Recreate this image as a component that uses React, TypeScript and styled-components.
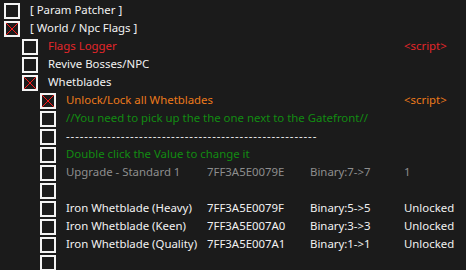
import { createGlobalStyle } from 'styled-components';
import styled from 'styled-components';

type Tone = 'white' | 'red' | 'orange' | 'green' | 'grey';

type RowType = {
  level: number;
  checked?: boolean;
  tone?: Tone;
  desc?: string;
  address?: string;
  kind?: string;
  value?: string;
  dashed?: boolean;
};

const colors: Record<Tone, string> = {
  white: '#f2f2f2',
  red: '#e3262a',
  orange: '#ec7a1c',
  green: '#128b12',
  grey: '#8e8e8e',
};

const rows: RowType[] = [
  { level: 0, desc: '[ Param Patcher ]' },
  { level: 0, checked: true, desc: '[ World / Npc Flags ]' },
  { level: 1, tone: 'red', desc: 'Flags Logger', value: '<script>' },
  { level: 1, desc: 'Revive Bosses/NPC' },
  { level: 1, checked: true, desc: 'Whetblades' },
  { level: 2, checked: true, tone: 'orange', desc: 'Unlock/Lock all Whetblades', value: '<script>' },
  { level: 2, tone: 'green', desc: '//You need to pick up the the one next to the Gatefront//' },
  { level: 2, desc: '-'.repeat(55), dashed: true },
  { level: 2, tone: 'green', desc: 'Double click the Value to change it' },
  { level: 2, tone: 'grey', desc: 'Upgrade - Standard 1', address: '7FF3A5E0079E', kind: 'Binary:7->7', value: '1' },
  { level: 2 },
  { level: 2, desc: 'Iron Whetblade (Heavy)', address: '7FF3A5E0079F', kind: 'Binary:5->5', value: 'Unlocked' },
  { level: 2, desc: 'Iron Whetblade (Keen)', address: '7FF3A5E007A0', kind: 'Binary:3->3', value: 'Unlocked' },
  { level: 2, desc: 'Iron Whetblade (Quality)', address: '7FF3A5E007A1', kind: 'Binary:1->1', value: 'Unlocked' },
  { level: 2 },
];

const GlobalStyle = createGlobalStyle`
  html, body {
    margin: 0;
    padding: 0;
    background: #1b1b1b;
  }
  body {
    width: 466px;
    height: 270px;
    overflow: hidden;
    font-family: "Noto Sans", "Open Sans", sans-serif;
    font-size: 11.4px;
  }
`;

const CrossIcon = () => (
  <svg width="12" height="12" viewBox="0 0 12 12">
    <path d="M0 0 L12 12 M12 0 L0 12" stroke="#ff1a1a" strokeWidth="1" />
  </svg>
);

const App = () => (
  <>
    <GlobalStyle />
    <Table>
      {rows.map((r, i) => {
        const tone = r.tone ?? 'white';
        return (
          <Row key={i}>
            <Desc $level={r.level}>
              <Check>{r.checked && <CrossIcon />}</Check>
              <Text $tone={tone} $dashed={r.dashed}>{r.desc}</Text>
            </Desc>
            <Cell $tone={tone}>{r.address}</Cell>
            <Cell $tone={tone}>{r.kind}</Cell>
            <Cell $tone={tone}>{r.value}</Cell>
          </Row>
        );
      })}
    </Table>
  </>
);

export default App;

const Table = styled.div`
  display: flex;
  flex-direction: column;
`;

const Row = styled.div`
  display: grid;
  grid-template-columns: 207px 103px 94px 1fr;
  height: 18px;
  align-items: center;
  white-space: nowrap;
`;

const Desc = styled.div<{ $level: number }>`
  display: flex;
  align-items: center;
  gap: 10px;
  padding-left: ${({ $level }) => 4 + $level * 18}px;
`;

const Check = styled.div`
  box-sizing: border-box;
  flex: none;
  width: 16px;
  height: 16px;
  border: 2px solid #f4f4f4;
  display: flex;
  margin-top: 3px;
  svg {
    display: block;
  }
`;

const Text = styled.span<{ $tone: Tone; $dashed?: boolean }>`
  color: ${({ $tone }) => colors[$tone]};
  line-height: 18px;
  letter-spacing: ${({ $dashed }) => ($dashed ? '0.9px' : 'normal')};
`;

const Cell = styled.span<{ $tone: Tone }>`
  color: ${({ $tone }) => colors[$tone]};
`;
